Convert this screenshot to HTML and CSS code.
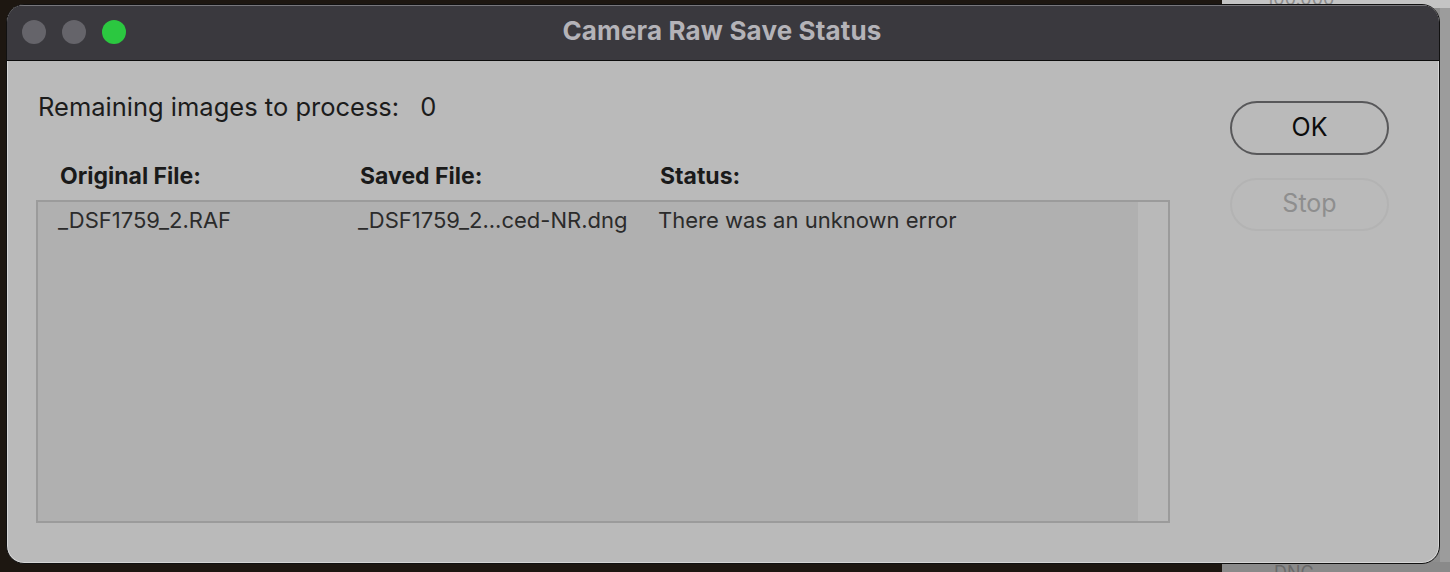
FILE: index.html
```html
<!DOCTYPE html>
<html>
<head>
<meta charset="utf-8">
<link rel="stylesheet" href="styles.css">
</head>
<body>
<div class="backdrop">
  <div class="bg-label">100.000</div>
</div>
<div class="backdrop-bottom">
  <div class="bg-label-bottom">DNG</div>
</div>
<div class="window">
  <div class="titlebar">
    <div class="lights">
      <span class="light grey"></span>
      <span class="light grey"></span>
      <span class="light green"></span>
    </div>
    <div class="title">Camera Raw Save Status</div>
  </div>
  <div class="content">
    <div class="main">
      <div class="remaining">Remaining images to process:<span class="count">0</span></div>
      <div class="headers">
        <div class="col">Original File:</div>
        <div class="col">Saved File:</div>
        <div class="col">Status:</div>
      </div>
      <div class="listbox">
        <div class="rows">
          <div class="row">
            <div class="col">_DSF1759_2.RAF</div>
            <div class="col">_DSF1759_2...ced-NR.dng</div>
            <div class="col">There was an unknown error</div>
          </div>
        </div>
        <div class="track"></div>
      </div>
    </div>
    <div class="buttons">
      <button class="btn ok">OK</button>
      <button class="btn stop">Stop</button>
    </div>
  </div>
</div>
</body>
</html>
```
FILE: styles.css
```css
html, body {
  margin: 0;
  padding: 0;
}
body {
  width: 1450px;
  height: 572px;
  overflow: hidden;
  background: linear-gradient(to right, #1d1711 0, #1d1711 1222px, #8e8e8e 1222px, #8e8e8e 1440px, #9c9c9c 1440px);
  font-family: "Inter", "Liberation Sans", sans-serif;
  position: relative;
}
.backdrop {
  position: absolute;
  left: 1222px;
  top: 0;
  right: 0;
  height: 8px;
  background: #c4c4c4;
  overflow: hidden;
}
.bg-label {
  position: absolute;
  left: 44px;
  top: -10px;
  font-size: 18px;
  line-height: 18px;
  color: #8a8a8a;
}
.backdrop-bottom {
  position: absolute;
  left: 1222px;
  bottom: 0;
  right: 0;
  height: 10px;
  background: #8a8a8a;
  overflow: hidden;
}
.bg-label-bottom {
  position: absolute;
  left: 52px;
  top: 2px;
  font-size: 18px;
  line-height: 18px;
  color: #6a6a6a;
}
.window {
  position: relative;
  margin: 4px 0 0 6px;
  width: 1434px;
  height: 560px;
  box-sizing: border-box;
  border: 1px solid #111;
  border-radius: 18px;
  background: #bababa;
  box-shadow: inset 0 0 0 1px #d6d6d6;
  overflow: hidden;
  display: flex;
  flex-direction: column;
}
.titlebar {
  position: relative;
  height: 56px;
  flex: none;
  box-sizing: border-box;
  background: #3a393e;
  border-bottom: 1px solid #0c0c0c;
  box-shadow: inset 0 1px 0 #77767b;
  display: flex;
  align-items: center;
  justify-content: center;
  padding-bottom: 4px;
}
.lights {
  position: absolute;
  left: 15px;
  top: 15px;
  display: flex;
  gap: 16px;
}
.light {
  width: 24px;
  height: 24px;
  border-radius: 50%;
  display: block;
}
.light.grey { background: #65646a; }
.light.green { background: #2bc840; }
.title {
  color: #b4b3b8;
  font-weight: 700;
  font-size: 26px;
  line-height: 30px;
  letter-spacing: 0.15px;
  margin-left: -2px;
}
.content {
  display: flex;
  padding: 0 50px 0 29px;
  gap: 60px;
}
.main {
  width: 1134px;
  display: flex;
  flex-direction: column;
}
.remaining {
  margin-top: 31px;
  margin-left: 2px;
  font-size: 25.5px;
  line-height: 30px;
  color: #1c1c1c;
}
.count {
  margin-left: 21px;
}
.headers {
  margin-top: 41px;
  display: flex;
  padding-left: 24px;
  font-weight: 700;
  font-size: 23px;
  line-height: 26px;
  color: #1a1a1a;
}
.col {
  width: 300px;
  white-space: nowrap;
}
.listbox {
  margin-top: 11px;
  height: 323px;
  box-sizing: border-box;
  border: 2px solid #9b9b9b;
  background: #b0b0b0;
  display: flex;
}
.rows {
  flex: 1;
  padding-top: 5px;
}
.row {
  display: flex;
  padding-left: 20px;
  font-size: 22px;
  line-height: 26px;
  color: #2b2b2b;
}
.track {
  width: 30px;
  background: #b9b9b9;
}
.buttons {
  display: flex;
  flex-direction: column;
  gap: 23px;
  padding-top: 40px;
}
.btn {
  width: 159px;
  height: 54px;
  border-radius: 27px;
  font-family: "Inter", "Liberation Sans", sans-serif;
  font-size: 25px;
  background: transparent;
  padding: 0 0 2px 0;
}
.ok {
  border: 2px solid #58585a;
  color: #0c0c0c;
}
.stop {
  height: 53px;
  border: 2px solid #b3b3b3;
  color: #8e8e8e;
  padding-bottom: 4px;
}
```
